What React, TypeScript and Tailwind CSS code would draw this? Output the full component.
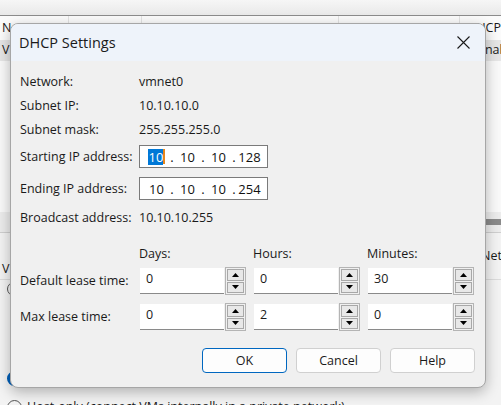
import React from "react";

const Arrow = ({ up }: { up: boolean }) => (
  <svg width="7" height="4" viewBox="0 0 7 4">
    <path d={up ? "M0 4 L3.5 0 L7 4Z" : "M0 0 L7 0 L3.5 4Z"} fill="#000" />
  </svg>
);

function Spin({ value }: { value: string }) {
  return (
    <div className="flex w-[106px] h-[26px] gap-[1px]">
      <div className="w-[84px] h-full bg-white border-b border-[#8a8a8a] pl-[6px] pt-[3px] text-[12.5px] leading-[16px] text-[#1a1a1a]">
        {value}
      </div>
      <div className="w-[21px] h-[28px] -mt-[1px] border border-[#b4b4b4] bg-[#f0f0f0] p-[1px] flex flex-col gap-[1px]">
        <div className="flex-1 bg-[#e8e8e8] border border-[#a8a8a8] flex items-center justify-center">
          <Arrow up />
        </div>
        <div className="flex-1 bg-[#e8e8e8] border border-[#a8a8a8] flex items-center justify-center">
          <Arrow up={false} />
        </div>
      </div>
    </div>
  );
}

function IpBox({ parts, selectFirst }: { parts: string[]; selectFirst?: boolean }) {
  return (
    <div className="w-[129px] h-[23px] bg-white border border-[#7a7a7a] pl-[3px] flex items-center text-[13px] leading-[16px] text-[#111]">
      {parts.map((p, i) => (
        <React.Fragment key={i}>
          {i > 0 && <div className="w-[4px] text-center">.</div>}
          <div className="w-[27px] flex justify-center items-center">
            {i === 0 && selectFirst ? (
              <>
                <span className="bg-[#0078d7] text-white h-[16px] leading-[16px] pl-[1px]">{p}</span>
                <span className="w-[2px] h-[15px] bg-[#e8861a]" />
              </>
            ) : (
              <span>{p}</span>
            )}
          </div>
        </React.Fragment>
      ))}
    </div>
  );
}

function InfoRow({ label, value, h }: { label: string; value: string; h: string }) {
  return (
    <div className={`flex items-center ${h}`}>
      <div className="w-[119px]">{label}</div>
      <div>{value}</div>
    </div>
  );
}

function Btn({ children, primary }: { children: React.ReactNode; primary?: boolean }) {
  return (
    <div
      className={`w-[85px] h-[25px] rounded-[4px] bg-[#fdfdfd] flex items-center justify-center text-[12.5px] text-[#1a1a1a] border ${
        primary ? "border-[#0067c0]" : "border-[#d0d0d0]"
      }`}
    >
      {children}
    </div>
  );
}

export default function App() {
  return (
    <div className="relative w-[501px] h-[405px] overflow-hidden bg-[#f3f3f3] font-['Open_Sans',sans-serif] text-[12.5px] text-[#1a1a1a]">
      {/* background app */}
      <div className="h-[16px] bg-gradient-to-b from-[#f6f6f6] to-[#e9e9e9] border-b border-[#8c8c8c]" />
      <div className="h-[24px] bg-[#fbfbfb] flex items-center">
        <div className="w-[70px] h-full border-r border-[#e2e2e2] pl-[2px] flex items-center">Name</div>
        <div className="w-[75px] h-full border-r border-[#e2e2e2]" />
        <div className="w-[200px] h-full border-r border-[#e2e2e2]" />
        <div className="w-[124px] h-full border-r border-[#e2e2e2]" />
        <div className="pl-[7px] whitespace-nowrap">DHCP</div>
      </div>
      <div className="h-[21px] bg-[#e6e6e6] flex items-center justify-between pl-[2px]">
        <span>VMnet0</span>
        <span className="w-[23px] overflow-hidden whitespace-nowrap">Enabled</span>
      </div>
      <div className="h-[151px] bg-[#f9f9f9]" />
      <div className="h-[21px] bg-[#ececec] border-b border-[#cfcfcf] flex items-center justify-end">
        <div className="w-[200px] h-[6px] bg-[#8a8a8a]" />
      </div>
      <div className="h-[47px] flex items-center justify-end border-b border-[#dcdcdc]">
        <span className="w-[20px] overflow-hidden whitespace-nowrap">Netw</span>
      </div>
      <div className="flex flex-col pl-[2px]">
        <div className="h-[16px] -mt-[20px]">VMnet Information</div>
        <div className="pl-[5px] mt-[4px] flex items-center gap-[4px]">
          <div className="w-[14px] h-[14px] rounded-full border border-[#555]" />
          <span>Bridged</span>
        </div>
        <div className="pl-[5px] mt-[72px] flex items-center">
          <div className="w-[15px] h-[15px] rounded-full border-[4px] border-[#005fb8]" />
        </div>
        <div className="pl-[5px] mt-[12px] flex items-center gap-[5px]">
          <div className="w-[15px] h-[15px] rounded-full border border-[#555]" />
          <span className="whitespace-nowrap">Host-only (connect VMs internally in a private network)</span>
        </div>
      </div>

      {/* dialog */}
      <div className="absolute left-[10px] top-[23px] w-[476px] h-[365px] rounded-[8px] border border-[#a6a6a6] bg-[#f0f0f0] shadow-[0_4px_14px_rgba(0,0,0,0.28)] overflow-hidden flex flex-col">
        <div className="h-[37px] bg-[#eef3fa] flex items-center justify-between pl-[8px] pr-[15px]">
          <span className="text-[14.5px] text-[#1a1a1a]">DHCP Settings</span>
          <svg width="13" height="13" viewBox="0 0 13 13">
            <path d="M0.5 0.5 L12.5 12.5 M12.5 0.5 L0.5 12.5" stroke="#1a1a1a" strokeWidth="1.1" />
          </svg>
        </div>
        <div className="pl-[9px] pt-[9px] flex flex-col leading-[16px]">
          <InfoRow label="Network:" value="vmnet0" h="h-[24px]" />
          <InfoRow label="Subnet IP:" value="10.10.10.0" h="h-[24px]" />
          <InfoRow label="Subnet mask:" value="255.255.255.0" h="h-[23px]" />
          <div className="flex items-center h-[23px] mt-[4px]">
            <div className="w-[119px]">Starting IP address:</div>
            <IpBox parts={["10", "10", "10", "128"]} selectFirst />
          </div>
          <div className="flex items-center h-[23px] mt-[9px]">
            <div className="w-[119px]">Ending IP address:</div>
            <IpBox parts={["10", "10", "10", "254"]} />
          </div>
          <InfoRow label="Broadcast address:" value="10.10.10.255" h="h-[24px] mt-[6px]" />
          <div className="flex items-center h-[16px] mt-[16px]">
            <div className="w-[119px]" />
            <div className="w-[114px]">Days:</div>
            <div className="w-[114px]">Hours:</div>
            <div className="w-[114px]">Minutes:</div>
          </div>
          <div className="flex items-center mt-[6px] h-[26px]">
            <div className="w-[120px]">Default lease time:</div>
            <div className="flex gap-[8px]">
              <Spin value="0" />
              <Spin value="0" />
              <Spin value="30" />
            </div>
          </div>
          <div className="flex items-center mt-[10px] h-[26px]">
            <div className="w-[120px]">Max lease time:</div>
            <div className="flex gap-[8px]">
              <Spin value="0" />
              <Spin value="2" />
              <Spin value="0" />
            </div>
          </div>
          <div className="flex justify-end gap-[9px] mt-[18px] pr-[10px]">
            <Btn primary>OK</Btn>
            <Btn>Cancel</Btn>
            <Btn>Help</Btn>
          </div>
        </div>
      </div>
    </div>
  );
}
